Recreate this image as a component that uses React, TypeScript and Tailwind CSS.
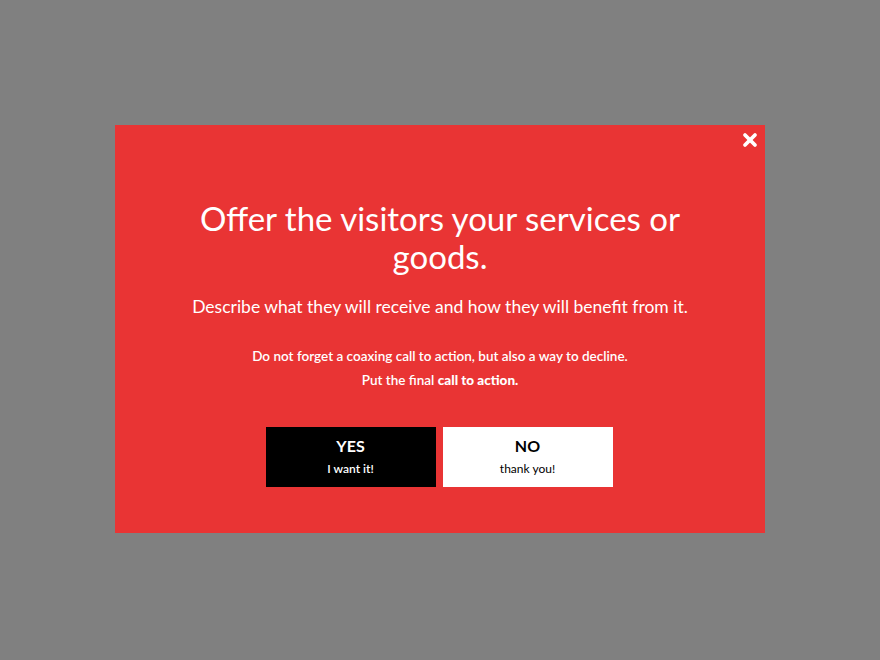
import { X } from 'lucide-react';

export default function App() {
  return (
    <div className="flex h-screen w-full items-center justify-center bg-[#808080] font-['Lato','Liberation_Sans',sans-serif]">
      <div className="relative mb-[2px] flex h-[408px] w-[650px] flex-col items-center bg-[#e93434] pt-[74px] text-white">
        <button className="absolute right-[5px] top-[5px] text-white">
          <X size={20} strokeWidth={4.5} />
        </button>

        <h1 className="w-[540px] text-center text-[33px] leading-[38px] font-normal">
          Offer the visitors your services or goods.
        </h1>

        <p className="mt-[20px] text-center text-[17.5px] leading-[24px]">
          Describe what they will receive and how they will benefit from it.
        </p>

        <div className="mt-[25px] text-center text-[13.5px] leading-[24px] font-semibold">
          <p>Do not forget a coaxing call to action, but also a way to decline.</p>
          <p>
            Put the final <b className="font-black">call to action.</b>
          </p>
        </div>

        <div className="ml-[-2px] mt-[35px] flex gap-[7px]">
          <button className="flex h-[60px] w-[170px] flex-col items-center bg-black pt-[9px] text-white">
            <span className="text-[16px] leading-[20px] font-bold">YES</span>
            <span className="mt-[5px] text-[12px] leading-[16px] font-semibold">I want it!</span>
          </button>
          <button className="flex h-[60px] w-[170px] flex-col items-center bg-white pt-[9px] text-black">
            <span className="text-[16px] leading-[20px] font-bold">NO</span>
            <span className="mt-[5px] text-[12px] leading-[16px]">thank you!</span>
          </button>
        </div>
      </div>
    </div>
  );
}
